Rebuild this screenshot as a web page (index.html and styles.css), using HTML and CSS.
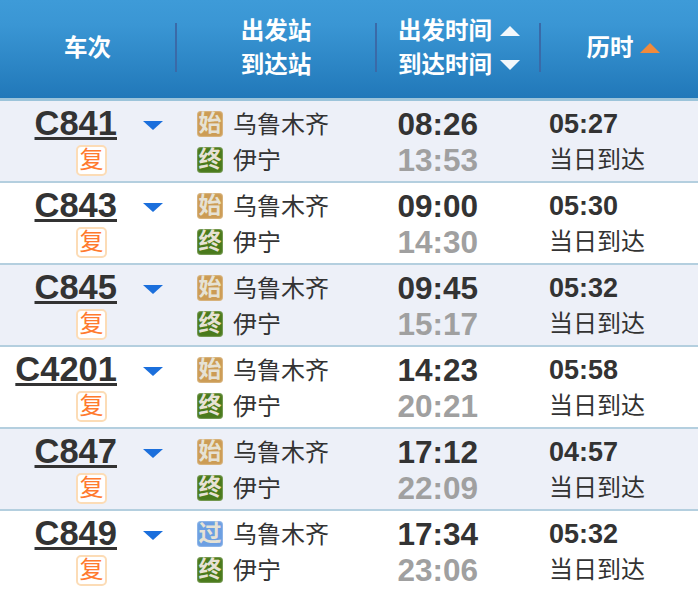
FILE: index.html
```html
<!DOCTYPE html>
<html lang="zh-CN">
<head>
<meta charset="utf-8">
<title>车次列表</title>
<link rel="stylesheet" href="styles.css">
</head>
<body>
<div class="header">
  <div class="hcell h-train">车次</div>
  <div class="hcell h-station"><span>出发站</span><span>到达站</span></div>
  <div class="hcell h-time">
    <div class="hline"><span>出发时间</span><i class="tri tri-up"></i></div>
    <div class="hline"><span>到达时间</span><i class="tri tri-down"></i></div>
  </div>
  <div class="hcell h-dur"><span>历时</span><i class="tri tri-orange"></i></div>
</div>

<div class="row alt">
  <div class="train"><a class="no">C841</a><span class="fu">复</span></div>
  <div class="arrow-cell"><i class="arrow"></i></div>
  <div class="stations">
    <div class="st"><span class="badge shi">始</span>乌鲁木齐</div>
    <div class="st"><span class="badge zhong">终</span>伊宁</div>
  </div>
  <div class="times"><b>08:26</b><b class="arr">13:53</b></div>
  <div class="dur"><b>05:27</b><span>当日到达</span></div>
</div>
<div class="row">
  <div class="train"><a class="no">C843</a><span class="fu">复</span></div>
  <div class="arrow-cell"><i class="arrow"></i></div>
  <div class="stations">
    <div class="st"><span class="badge shi">始</span>乌鲁木齐</div>
    <div class="st"><span class="badge zhong">终</span>伊宁</div>
  </div>
  <div class="times"><b>09:00</b><b class="arr">14:30</b></div>
  <div class="dur"><b>05:30</b><span>当日到达</span></div>
</div>
<div class="row alt">
  <div class="train"><a class="no">C845</a><span class="fu">复</span></div>
  <div class="arrow-cell"><i class="arrow"></i></div>
  <div class="stations">
    <div class="st"><span class="badge shi">始</span>乌鲁木齐</div>
    <div class="st"><span class="badge zhong">终</span>伊宁</div>
  </div>
  <div class="times"><b>09:45</b><b class="arr">15:17</b></div>
  <div class="dur"><b>05:32</b><span>当日到达</span></div>
</div>
<div class="row">
  <div class="train"><a class="no">C4201</a><span class="fu">复</span></div>
  <div class="arrow-cell"><i class="arrow"></i></div>
  <div class="stations">
    <div class="st"><span class="badge shi">始</span>乌鲁木齐</div>
    <div class="st"><span class="badge zhong">终</span>伊宁</div>
  </div>
  <div class="times"><b>14:23</b><b class="arr">20:21</b></div>
  <div class="dur"><b>05:58</b><span>当日到达</span></div>
</div>
<div class="row alt">
  <div class="train"><a class="no">C847</a><span class="fu">复</span></div>
  <div class="arrow-cell"><i class="arrow"></i></div>
  <div class="stations">
    <div class="st"><span class="badge shi">始</span>乌鲁木齐</div>
    <div class="st"><span class="badge zhong">终</span>伊宁</div>
  </div>
  <div class="times"><b>17:12</b><b class="arr">22:09</b></div>
  <div class="dur"><b>04:57</b><span>当日到达</span></div>
</div>
<div class="row">
  <div class="train"><a class="no">C849</a><span class="fu">复</span></div>
  <div class="arrow-cell"><i class="arrow"></i></div>
  <div class="stations">
    <div class="st"><span class="badge guo">过</span>乌鲁木齐</div>
    <div class="st"><span class="badge zhong">终</span>伊宁</div>
  </div>
  <div class="times"><b>17:34</b><b class="arr">23:06</b></div>
  <div class="dur"><b>05:32</b><span>当日到达</span></div>
</div>
</body>
</html>
```
FILE: styles.css
```css
html, body {
  margin: 0;
  padding: 0;
  background: #fff;
  overflow: hidden;
}
body {
  width: 698px;
  height: 596px;
  font-family: "Liberation Sans", "Noto Sans CJK SC", sans-serif;
  color: #333;
}
.header {
  display: grid;
  grid-template-columns: 175px 200px 164px 159px;
  height: 98px;
  border-bottom: 3px solid #9cc4da;
  background: linear-gradient(#3e9bd8, #3a96d4 25%, #2178b9);
  color: #fff;
  font-weight: bold;
  font-size: 23.5px;
  align-items: center;
}
.hcell {
  height: 49px;
  display: flex;
  align-items: center;
  justify-content: center;
  line-height: 34px;
  margin-top: -3px;
}
.h-station, .h-time {
  flex-direction: column;
}
.h-station, .h-time, .h-dur {
  border-left: 2px solid #3a6aa8;
  box-sizing: border-box;
}
.h-time { align-items: flex-start; padding-left: 21px; }
.h-dur { padding-left: 7px; }
.hline { display: flex; align-items: center; gap: 8px; height: 34px; }
.tri {
  display: block;
  width: 0;
  height: 0;
  border-left: 10px solid transparent;
  border-right: 10px solid transparent;
}
.tri-up { border-bottom: 10px solid #f2f7fb; }
.tri-down { border-top: 10px solid #f2f7fb; }
.tri-orange { border-bottom: 10px solid #f08a3c; margin-left: 6px; }
.row {
  display: grid;
  grid-template-columns: 117px 80px 201px 151px 149px;
  height: 75px;
  padding-top: 5px;
  border-bottom: 2px solid #b4cfdf;
}
.row:last-child { border-bottom: 0; }
.alt { background: #edf0f8; }
.train {
  display: flex;
  flex-direction: column;
  align-items: flex-end;
}
.no {
  font-size: 34.5px;
  font-weight: bold;
  line-height: 35px;
  text-decoration: underline;
  text-decoration-thickness: 3px;
  text-underline-offset: 2px;
  color: #333;
}
.fu {
  box-sizing: border-box;
  width: 31px;
  height: 31px;
  margin: 4px 10px 0 0;
  border: 2px solid #fcdcb6;
  border-radius: 5px;
  background: #fff;
  color: #ff7a2e;
  font-size: 24px;
  line-height: 26px;
  text-align: center;
}
.arrow-cell { padding: 15px 0 0 26px; }
.arrow {
  display: block;
  width: 0;
  height: 0;
  border-left: 10px solid transparent;
  border-right: 10px solid transparent;
  border-top: 9px solid #1b6fdc;
}
.stations { display: flex; flex-direction: column; }
.st {
  display: flex;
  align-items: center;
  box-sizing: border-box;
  height: 36px;
  padding-bottom: 4px;
  font-size: 24px;
  color: #333;
}
.badge {
  box-sizing: border-box;
  width: 26px;
  height: 26px;
  margin: 4px 10px 0 0;
  border-radius: 4px;
  box-shadow: inset 0 0 1px 1px rgba(255, 255, 255, 0.25);
  color: #e6e2d4;
  font-size: 23px;
  font-weight: bold;
  line-height: 25px;
  text-align: center;
}
.shi { background: #cc9c55; }
.zhong { background: #4a7a1c; }
.guo { background: #6c9fe2; }
.times, .dur { display: flex; flex-direction: column; }
.times { margin-left: -0.5px; }
.times b {
  font-size: 31.5px;
  line-height: 36px;
}
.times .arr { color: #a0a0a0; }
.dur b {
  font-size: 27px;
  line-height: 36px;
}
.dur span {
  font-size: 24px;
  line-height: 36px;
}
```
